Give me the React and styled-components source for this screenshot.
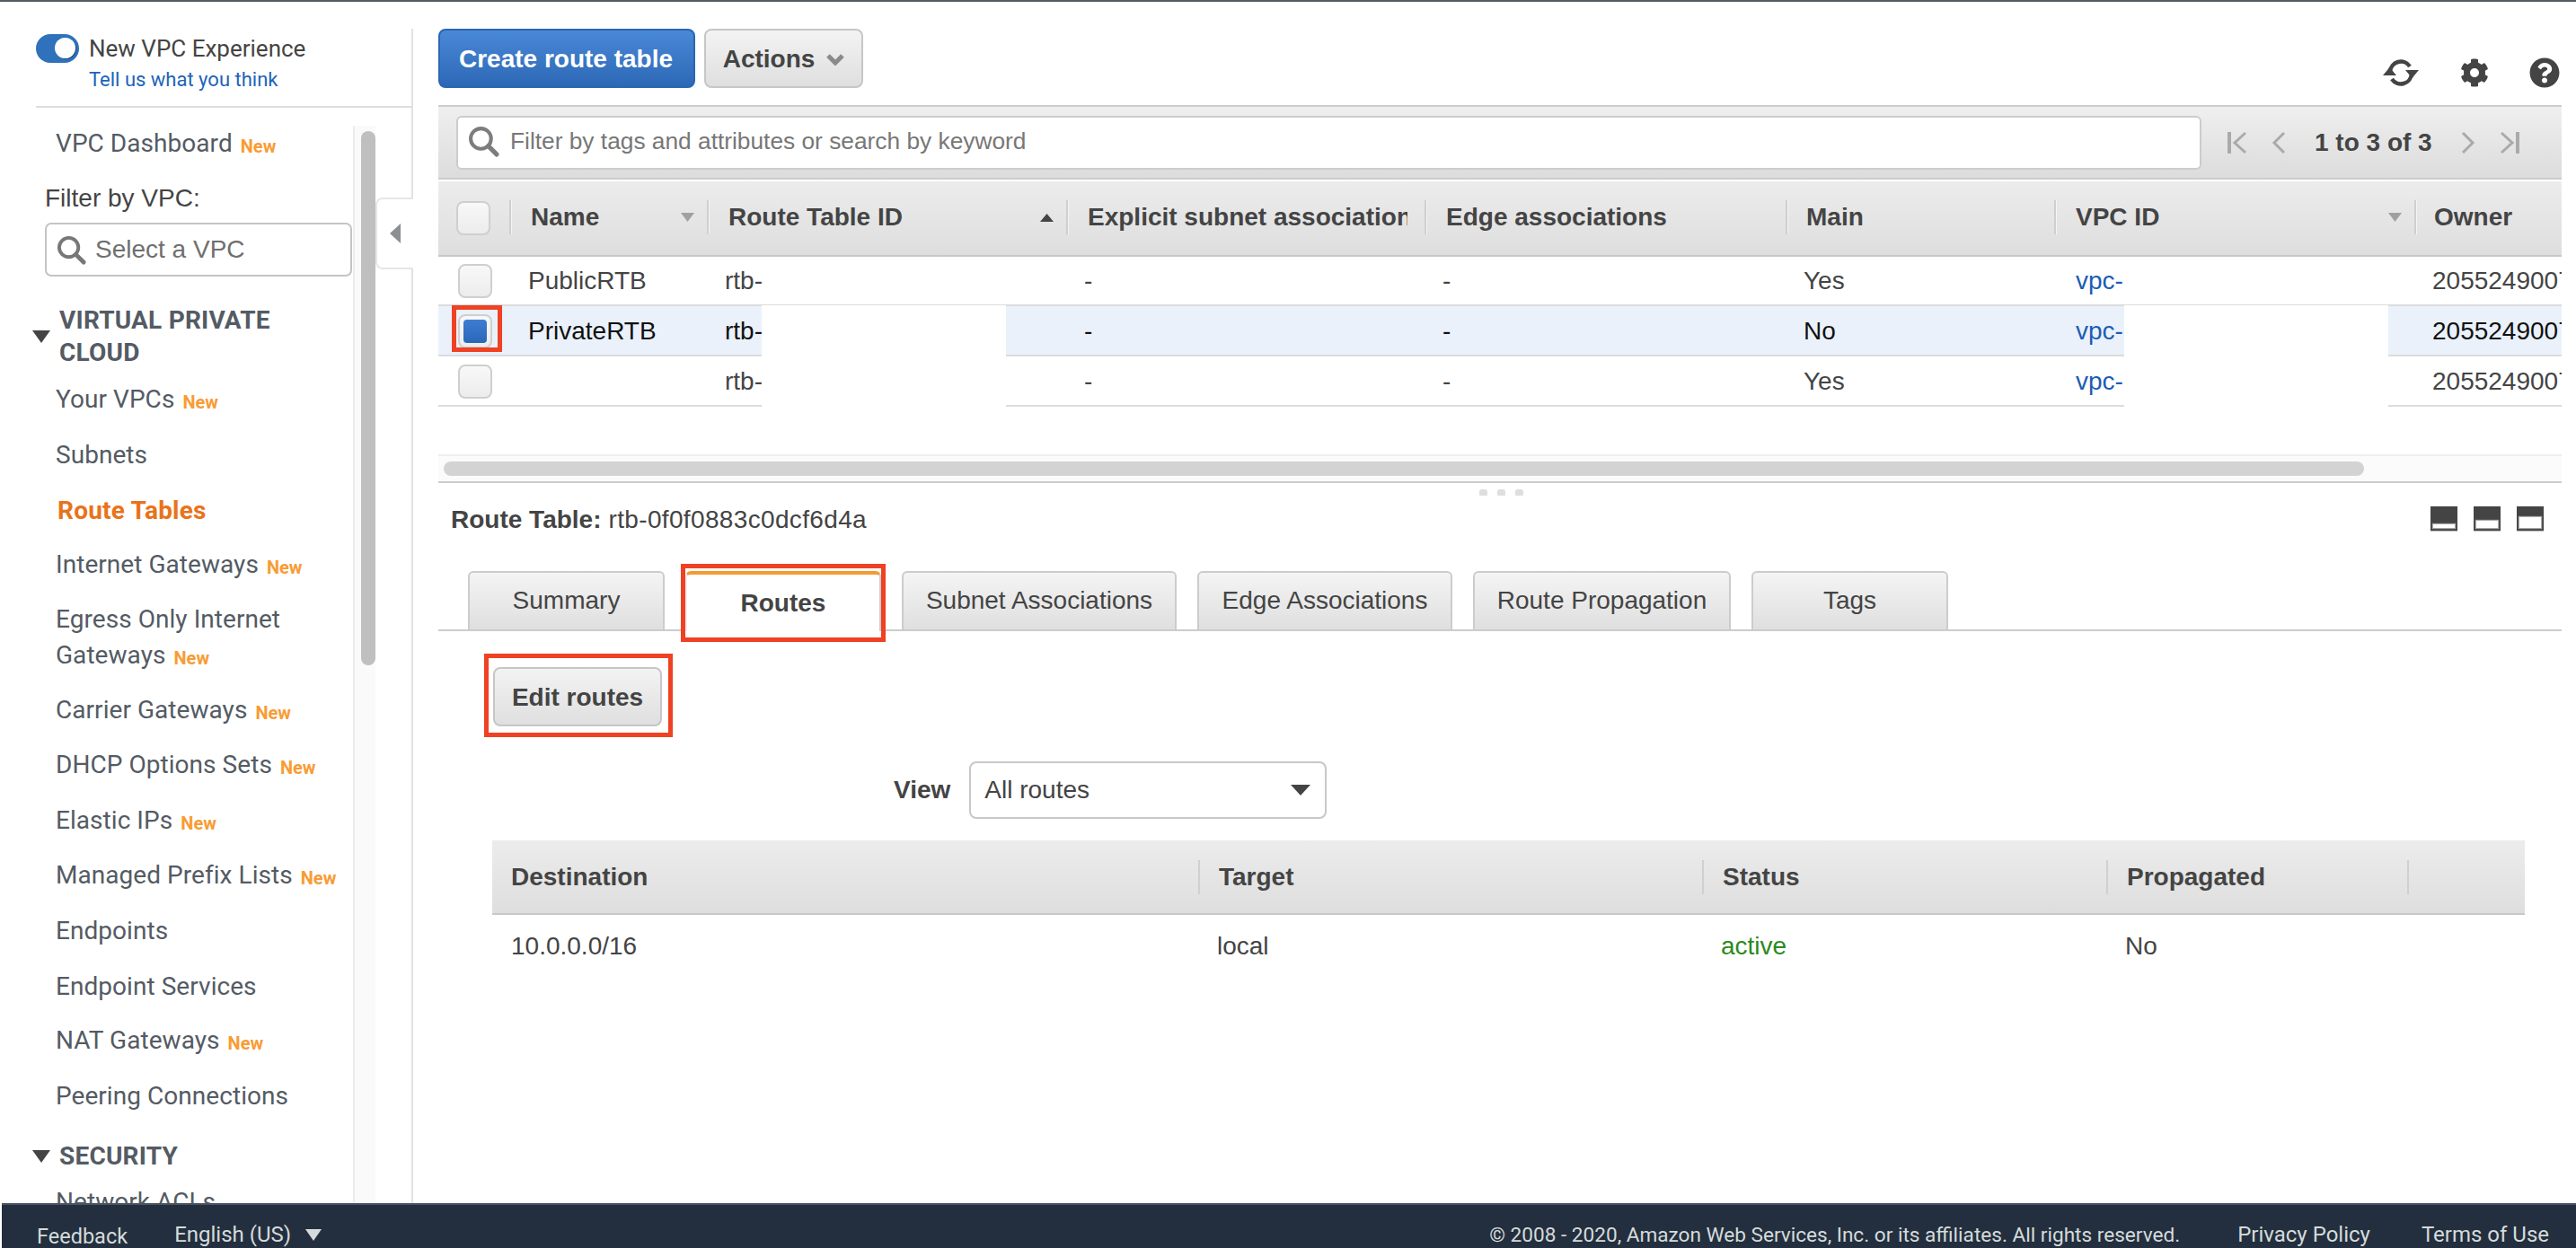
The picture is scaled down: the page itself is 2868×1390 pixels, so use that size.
import React from "react";
import styled, { createGlobalStyle } from "styled-components";
import { FaCog, FaQuestionCircle } from "react-icons/fa";

const Global = createGlobalStyle`
  * { box-sizing: border-box; }
  html, body { margin: 0; padding: 0; background: #fff; overflow: hidden; }
  body { font-family: "Liberation Sans", Arial, sans-serif; font-size: 28px; color: #444; }
`;

const ember = `Roboto, "Noto Sans", sans-serif`;
const helv = `"Liberation Sans", Arial, sans-serif`;
const red = "#ef4123";

const Page = styled.div`
  width: 2868px; height: 1390px; display: flex; flex-direction: column; overflow: hidden;
  border-top: 2px solid #545b64;
`;
const Body = styled.div`display: flex; flex: 1; min-height: 0;`;

/* ---------- sidebar ---------- */
const Sidebar = styled.aside`
  width: 460px; margin-top: 30px; border-right: 2px solid #e2e2e2; flex: none; position: relative;
  display: flex; flex-direction: column; min-height: 0; font-family: ${ember};
`;
const Experience = styled.div`
  margin-left: 40px; height: 88px; border-bottom: 2px solid #ddd; padding-top: 6px;
  display: grid; grid-template-columns: 48px 1fr; column-gap: 11px; align-content: start;
`;
const Toggle = styled.div`
  width: 48px; height: 32px; border-radius: 16px; background: #2f72bb; position: relative;
  &::after { content: ""; position: absolute; left: 21px; top: 4px; width: 23px; height: 23px;
    border-radius: 50%; background: #fff; box-shadow: 1px 1px 0 #1f4f86; }
`;
const ExpTitle = styled.div`font-size: 26px; line-height: 32px; color: #444;`;
const ExpLink = styled.a`grid-column: 2; font-size: 22px; line-height: 28px; margin-top: 5px; color: #1c64b9;`;
const NavPanel = styled.div`display: flex; flex: 1; min-height: 0; padding-top: 10px;`;
const NavList = styled.nav`width: 393px; flex: none; overflow: hidden;`;
const Track = styled.div`
  width: 25px; flex: none; margin-top: 10px; padding: 6px 0 0 7px; background: #fafafa; border-left: 2px solid #ececec;
`;
const Thumb = styled.div`width: 16px; height: 595px; border-radius: 8px; background: #bfbfbf;`;
const NavItem = styled.div`
  height: ${p => (p.$two ? 101 : 61.3)}px; padding-left: ${p => (p.$active ? 64 : 62)}px; display: flex; align-items: center;
  font-size: 28px; line-height: 40px; letter-spacing: ${p => (p.$active ? ".2px" : ".05px")}; color: ${p => (p.$active ? "#e8731a" : "#545b64")}; font-weight: ${p => (p.$active ? 700 : 400)};
  white-space: ${p => (p.$two ? "normal" : "nowrap")};
`;
const NewTag = styled.span`color: #f89c34; font-size: 20px; font-weight: 700; margin-left: 9px; letter-spacing: 0; position: relative; top: 1px;`;
const FilterLabel = styled.div`padding-left: 50px; height: 57px; line-height: 59px; font-family: ${helv}; font-size: 28px; color: #444;`;
const VpcInput = styled.div`
  margin-left: 50px; width: 342px; height: 60px; border: 2px solid #c4c4c4; border-radius: 7px;
  display: flex; align-items: center; gap: 10px; padding-left: 11px; font-family: ${helv}; font-size: 28px; color: #6f6f6f;
`;
const Section = styled.div`
  margin: ${p => p.$top}px 0 ${p => p.$bottom}px 36px; display: flex; align-items: center; gap: 10px;
  font-size: 28px; font-weight: 700; line-height: 36px; color: #545b64;
`;
const SectionText = styled.div`width: 300px; letter-spacing: .2px;`;
const CollapseTab = styled.div`
  position: absolute; left: 418px; top: 188px; width: 42px; height: 80px; background: #fff;
  border: 2px solid #e6e6e6; border-right: 0; border-radius: 8px 0 0 8px; display: flex; align-items: center; justify-content: center;
`;

/* ---------- main ---------- */
const Main = styled.main`width: 2364px; margin-left: 28px; flex: none; display: flex; flex-direction: column; min-height: 0;`;
const Toolbar = styled.div`height: 115px; padding: 30px 2px 0 0; display: flex; gap: 10px; align-items: flex-start;`;
const Btn = styled.button`
  height: ${p => p.$h || 66}px; border-radius: 8px; border: 2px solid #c6c6c6; background: linear-gradient(#f3f3f3, #dfdfdf); color: #444;
  font: 700 28px ${helv}; padding: 2px 0 0; display: flex; align-items: center; justify-content: center; gap: 13px; position: relative;
  width: ${p => p.$w}px; flex: none;
`;
const PrimaryBtn = styled(Btn)`background: linear-gradient(#4a88d8, #2c68b5); border-color: #2a66b2; color: #fff; padding-right: 2px;`;
const TopIcons = styled.div`margin-left: auto; margin-top: 32px; display: flex; align-items: center; gap: 45px; color: #444;`;
const FilterBar = styled.div`
  height: 83px; border-top: 2px solid #ccc; border-bottom: 2px solid #ccc; background: linear-gradient(#efefef, #dcdcdc);
  display: flex; align-items: center; padding-left: 20px;
`;
const FilterInput = styled.div`
  width: 1943px; height: 60px; background: #fff; border: 2px solid #ccc; border-radius: 6px; display: flex; align-items: center;
  gap: 12px; padding: 0 0 2px 11px; color: #777; font-size: 26.3px; white-space: nowrap;
`;
const Pager = styled.div`margin-left: 28px; display: flex; align-items: center; color: #444; font-size: 28px; font-weight: 700; white-space: nowrap;`;
const PagerText = styled.span`margin: 0 32px;`;
const PagerGap = styled.span`width: 27px; flex: none;`;
const PagerIcon = styled.svg`flex: none;`;
const cols = "79px 220px 400px 399px 402px 299px 401px 164px";
const HeadRow = styled.div`
  margin-top: 2px; height: 84px; display: grid; grid-template-columns: ${cols}; align-items: center;
  background: linear-gradient(#ececec, #dedede); border-bottom: 2px solid #c8c8c8;
`;
const HeadCheck = styled.div`padding-left: 20px; display: flex;`;
const HeadCell = styled.div`
  height: 38px; border-left: 2px solid #cfcfcf; box-shadow: inset 1px 0 0 #f4f4f4; padding: 0 14px 0 ${p => p.$pl || 22}px; display: flex; align-items: center; justify-content: space-between;
  margin-right: ${p => p.$mr || 0}px; margin-top: -2px;
  font-weight: 700; font-size: 28px; color: #444; white-space: nowrap; overflow: hidden; position: relative;
`;
const Check = styled.div`
  width: 38px; height: 38px; border: 2px solid #cfcfcf; border-radius: 8px; background: linear-gradient(#f8f8f8, #ececec); flex: none;
  display: flex; align-items: center; justify-content: center; position: relative;
`;
const CheckFill = styled.div`width: 26px; height: 26px; border-radius: 4px; background: linear-gradient(#3d7dd1, #2a66b8);`;
const Rows = styled.div`position: relative; height: 167px;`;
const Row = styled.div`
  height: ${p => p.$h}px; display: grid; grid-template-columns: ${cols}; align-items: center; border-bottom: 2px solid #dcdcdc; padding-top: 1px;
  background: ${p => (p.$sel ? "#eaf1fb" : "#fff")}; color: ${p => (p.$sel ? "#111" : "#444")}; font-size: 28px;
`;
const Cell = styled.div`padding-left: ${p => p.$pl ?? 21}px; white-space: nowrap; overflow: ${p => (p.$open ? "visible" : "hidden")}; display: flex;`;
const Link = styled.span`color: #1c5cb4;`;
const Mask = styled.div`position: absolute; top: ${p => p.$top}px; left: ${p => p.$l}px; width: ${p => p.$w}px; height: 114px; background: #fff;`;
const RedBox = styled.div`
  position: absolute; border: 5px solid ${red}; pointer-events: none;
  top: ${p => p.$t}px; right: ${p => p.$r}px; bottom: ${p => p.$b}px; left: ${p => p.$l}px;
`;
const HScroll = styled.div`
  margin-top: 53px; height: 32px; background: #fbfbfb; border-top: 2px solid #efefef; border-bottom: 2px solid #cbcbcb;
  padding: 6px 0 0 6px;
`;
const HThumb = styled.div`width: 2138px; height: 16px; border-radius: 8px; background: #d3d3d3;`;
const Grip = styled.div`height: 7px; margin-top: 7px; padding-left: 2px; display: flex; justify-content: center; gap: 11px;`;
const Dot = styled.span`width: 9px; height: 7px; border-radius: 3px 3px 1px 1px; background: #dedede;`;
const PaneHead = styled.div`height: 52px; padding: 2px 20px 0 14px; display: flex; align-items: center; color: #444; font-size: 28px;`;
const PaneTitle = styled.b`margin-right: 8px; font-size: 28px;`;
const PaneValue = styled.span`flex: 1; letter-spacing: .35px;`;
const PaneBtns = styled.div`display: flex; gap: 18px; margin-top: -2px;`;
const PaneBtn = styled.div`width: 30px; height: 28px; background: #444; border-bottom: 1px solid #bbb; display: flex; align-items: flex-end; justify-content: center; padding-bottom: 3px;`;
const PaneInner = styled.div`width: 24px; height: ${p => p.$h}px; background: #fff; box-shadow: 0 0 1px 1px #aaa;`;
const TabBar = styled.div`margin-top: 32px; height: 67px; border-bottom: 2px solid #ccc; padding-left: 33px; display: flex; gap: 23px;`;
const Tab = styled.div`
  width: ${p => p.$w}px; height: 65px; border: 2px solid #ccc; border-bottom: 0; border-radius: 6px 6px 0 0; background: linear-gradient(#f4f4f4, #dfdfdf);
  display: flex; align-items: center; justify-content: center; padding-bottom: 2px; color: #444; font-size: 28px; white-space: nowrap; flex: none;
`;
const ActiveTab = styled(Tab)`
  height: 67px; background: #fff; border-top: 4px solid #f49b30; border-left-color: #eee; border-right-color: #ccc; font-weight: 700; position: relative; padding-bottom: 0;
`;
const EditWrap = styled.div`margin: 40px 0 0 61px; width: 188px; position: relative;`;
const ViewRow = styled.div`margin-top: 39px; padding-left: 507px; display: flex; align-items: center; gap: 21px;`;
const ViewLabel = styled.b`font-size: 28px; color: #444;`;
const Select = styled.div`
  width: 398px; height: 64px; border: 2px solid #c8c8c8; border-radius: 8px; padding: 0 16px 0 15px; display: flex; align-items: center; justify-content: space-between; font-size: 28px; color: #444;
`;
const RouteGrid = styled.div`margin: 24px 0 0 60px; width: 2263px;`;
const routeCols = "786px 561px 450px 335px 131px";
const RouteHead = styled.div`
  height: 83px; display: grid; grid-template-columns: ${routeCols}; align-items: center; background: linear-gradient(#ececec, #dedede); border-bottom: 2px solid #c8c8c8;
`;
const RouteHeadCell = styled.div`
  height: 38px; display: flex; align-items: center; padding-left: 21px; font-weight: 700; font-size: 28px; color: #444;
  border-left: ${p => (p.$first ? "0" : "2px solid #d0d0d0")};
`;
const RouteRow = styled.div`height: 70px; display: grid; grid-template-columns: ${routeCols}; align-items: center; font-size: 28px; color: #444;`;
const RouteCell = styled.div`padding-left: 21px; color: ${p => p.$c || "#444"};`;

/* ---------- footer ---------- */
const Footer = styled.footer`
  height: 50px; margin-left: 2px; flex: none; background: #232f3e; border-top: 2px solid #4a5563; color: #d5dbdb; font-family: ${ember};
  display: flex; align-items: center; padding: 18px 30px 0 39px; white-space: nowrap;
`;
const FootItem = styled.span`margin-left: ${p => p.$ml || 0}px; position: relative; top: ${p => p.$top || 0}px; font-size: ${p => p.$fs || 24}px; display: flex;`;
const FootSpacer = styled.span`flex: 1;`;

/* ---------- drawings ---------- */
const Tri = ({ w = 20, h = 14, c = "#545b64", up }) => (
  <svg width={w} height={h} viewBox="0 0 20 14" preserveAspectRatio="none">
    <path d={up ? "M0 14 L10 0 L20 14Z" : "M0 0 L20 0 L10 14Z"} fill={c} />
  </svg>
);
const LeftTri = () => (
  <svg width="12" height="22" viewBox="0 0 12 22"><path d="M12 0 L0 11 L12 22Z" fill="#8b8f94" /></svg>
);
const Search = ({ s = 34, c = "#7d7d7d" }) => (
  <svg width={s} height={s} viewBox="0 0 34 34">
    <circle cx="14" cy="14" r="11" fill="none" stroke={c} strokeWidth="4" />
    <path d="M22 22 L31 31" stroke={c} strokeWidth="5" strokeLinecap="round" />
  </svg>
);
const Refresh = () => (
  <svg width="42" height="32" viewBox="0 0 42 32">
    <g fill="none" stroke="#444" strokeWidth="4.500">
      <path d="M9 15 A12 12 0 0 1 31 9" />
      <path d="M33 17 A12 12 0 0 1 11 23" />
    </g>
    <path d="M26 13 L41 13 L33.500 22Z" fill="#444" />
    <path d="M1 19 L16 19 L8.500 10Z" fill="#444" />
  </svg>
);
const Chev = ({ d, w = 22, bar }) => (
  <PagerIcon width={w} height="26" viewBox={`0 0 ${w} 26`} fill="none" stroke="#aaa" strokeWidth="3">
    <path d={d} />
    {bar && <path d={bar} strokeWidth="4" />}
  </PagerIcon>
);

const Nav = ({ children, isNew, ...rest }) => (
  <NavItem {...rest}><span>{children}{isNew && <NewTag>New</NewTag>}</span></NavItem>
);

const rows = [
  { name: "PublicRTB", main: "Yes", h: 55 },
  { name: "PrivateRTB", main: "No", sel: true, h: 56 },
  { name: "", main: "Yes", h: 56 },
];

export default function App() {
  return (
    <>
      <Global />
      <Page>
        <Body>
          <Sidebar>
            <Experience>
              <Toggle />
              <ExpTitle>New VPC Experience</ExpTitle>
              <ExpLink>Tell us what you think</ExpLink>
            </Experience>
            <NavPanel>
              <NavList>
                <Nav isNew>VPC Dashboard</Nav>
                <FilterLabel>Filter by VPC:</FilterLabel>
                <VpcInput><Search s={33} c="#777" />Select a VPC</VpcInput>
                <Section $top={31} $bottom={4}>
                  <Tri c="#444" />
                  <SectionText>VIRTUAL PRIVATE CLOUD</SectionText>
                </Section>
                <Nav isNew>Your VPCs</Nav>
                <Nav>Subnets</Nav>
                <Nav $active>Route Tables</Nav>
                <Nav isNew>Internet Gateways</Nav>
                <Nav $two isNew>Egress Only Internet Gateways</Nav>
                <Nav isNew>Carrier Gateways</Nav>
                <Nav isNew>DHCP Options Sets</Nav>
                <Nav isNew>Elastic IPs</Nav>
                <Nav isNew>Managed Prefix Lists</Nav>
                <Nav>Endpoints</Nav>
                <Nav>Endpoint Services</Nav>
                <Nav isNew>NAT Gateways</Nav>
                <Nav>Peering Connections</Nav>
                <Section $top={18} $bottom={2}>
                  <Tri c="#444" />
                  <SectionText>SECURITY</SectionText>
                </Section>
                <Nav>Network ACLs</Nav>
              </NavList>
              <Track><Thumb /></Track>
            </NavPanel>
            <CollapseTab><LeftTri /></CollapseTab>
          </Sidebar>
          <Main>
            <Toolbar>
              <PrimaryBtn $w={286}>Create route table</PrimaryBtn>
              <Btn $w={177}>Actions
                <svg width="20" height="13" viewBox="0 0 20 13"><path d="M2 2 L10 10 L18 2" fill="none" stroke="#8a8a8a" strokeWidth="5" /></svg>
              </Btn>
              <TopIcons>
                <Refresh />
                <FaCog size={32} />
                <FaQuestionCircle size={34} />
              </TopIcons>
            </Toolbar>
            <FilterBar>
              <FilterInput><Search s={35} />Filter by tags and attributes or search by keyword</FilterInput>
              <Pager>
                <Chev d="M21 2 L9 13 L21 24" bar="M3 1 V25" w={23} />
                <PagerGap />
                <Chev d="M14 2 L3 13 L14 24" w={16} />
                <PagerText>1 to 3 of 3</PagerText>
                <Chev d="M2 2 L13 13 L2 24" w={16} />
                <PagerGap />
                <Chev d="M2 2 L14 13 L2 24" bar="M20 1 V25" w={23} />
              </Pager>
            </FilterBar>
            <HeadRow>
              <HeadCheck><Check /></HeadCheck>
              <HeadCell>Name<Tri w={15} h={10} c="#a0a0a0" /></HeadCell>
              <HeadCell>Route Table ID<Tri w={15} h={9} c="#444" up /></HeadCell>
              <HeadCell $mr={19}>Explicit subnet association</HeadCell>
              <HeadCell>Edge associations</HeadCell>
              <HeadCell $pl={21}>Main</HeadCell>
              <HeadCell>VPC ID<Tri w={15} h={10} c="#a0a0a0" /></HeadCell>
              <HeadCell $pl={20}>Owner</HeadCell>
            </HeadRow>
            <Rows>
              {rows.map((r, i) => (
                <Row key={i} $sel={r.sel} $h={r.h}>
                  <Cell $pl={22} $open>
                    <Check>
                      {r.sel && <CheckFill />}
                      {r.sel && <RedBox $t={-12} $r={-13} $b={-6} $l={-9} />}
                    </Check>
                  </Cell>
                  <Cell>{r.name}</Cell>
                  <Cell $pl={20}>rtb-</Cell>
                  <Cell $pl={20}>-</Cell>
                  <Cell $pl={20}>-</Cell>
                  <Cell $pl={20}>{r.main}</Cell>
                  <Cell $pl={24}><Link>vpc-</Link></Cell>
                  <Cell $pl={20}>205524900719</Cell>
                </Row>
              ))}
              <Mask $top={54} $l={360} $w={272} />
              <Mask $top={54} $l={1877} $w={294} />
            </Rows>
            <HScroll><HThumb /></HScroll>
            <Grip><Dot /><Dot /><Dot /></Grip>
            <PaneHead>
              <PaneTitle>Route Table:</PaneTitle>
              <PaneValue>rtb-0f0f0883c0dcf6d4a</PaneValue>
              <PaneBtns>
                <PaneBtn><PaneInner $h={4} /></PaneBtn>
                <PaneBtn><PaneInner $h={8} /></PaneBtn>
                <PaneBtn><PaneInner $h={12} /></PaneBtn>
              </PaneBtns>
            </PaneHead>
            <TabBar>
              <Tab $w={219}>Summary</Tab>
              <ActiveTab $w={218}>Routes<RedBox $t={-12} $r={-7} $b={-12} $l={-7} /></ActiveTab>
              <Tab $w={306}>Subnet Associations</Tab>
              <Tab $w={284}>Edge Associations</Tab>
              <Tab $w={287}>Route Propagation</Tab>
              <Tab $w={219}>Tags</Tab>
            </TabBar>
            <EditWrap>
              <Btn $w={188}>Edit routes</Btn>
              <RedBox $t={-15} $r={-12} $b={-12} $l={-10} />
            </EditWrap>
            <ViewRow>
              <ViewLabel>View</ViewLabel>
              <Select>All routes<Tri w={22} h={12} c="#444" /></Select>
            </ViewRow>
            <RouteGrid>
              <RouteHead>
                <RouteHeadCell $first>Destination</RouteHeadCell>
                <RouteHeadCell>Target</RouteHeadCell>
                <RouteHeadCell>Status</RouteHeadCell>
                <RouteHeadCell>Propagated</RouteHeadCell>
                <RouteHeadCell />
              </RouteHead>
              <RouteRow>
                <RouteCell>10.0.0.0/16</RouteCell>
                <RouteCell>local</RouteCell>
                <RouteCell $c="#2a8a1c">active</RouteCell>
                <RouteCell>No</RouteCell>
              </RouteRow>
            </RouteGrid>
          </Main>
        </Body>
        <Footer>
          <FootItem $top={2} $fs={23.5}>Feedback</FootItem>
          <FootItem $ml={52}>English (US)</FootItem>
          <FootItem $ml={16}><Tri w={18} h={13} c="#d5dbdb" /></FootItem>
          <FootSpacer />
          <FootItem $fs={22.6}>© 2008 - 2020, Amazon Web Services, Inc. or its affiliates. All rights reserved.</FootItem>
          <FootItem $ml={64}>Privacy Policy</FootItem>
          <FootItem $ml={57}>Terms of Use</FootItem>
        </Footer>
      </Page>
    </>
  );
}
